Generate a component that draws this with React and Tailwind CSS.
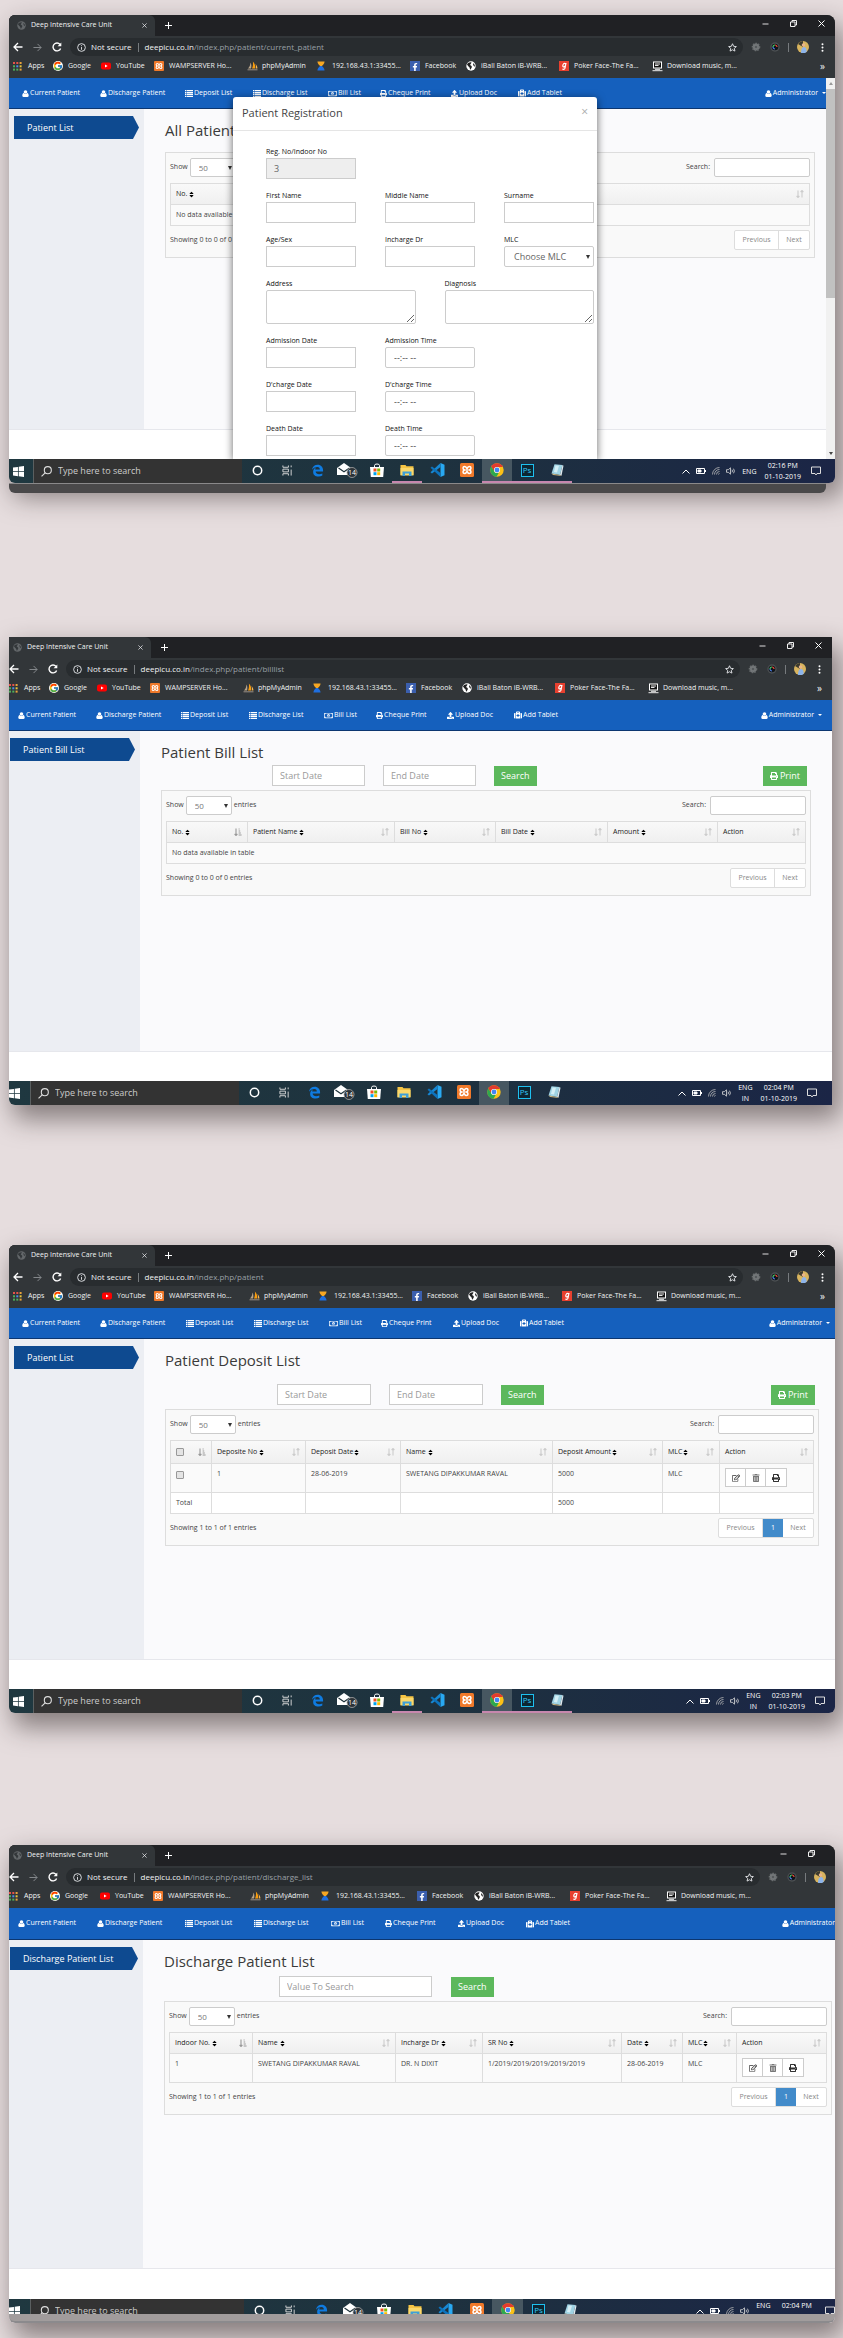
import React from "react";
import { clsx } from "clsx";
import { FaSort, FaPrint, FaUpload, FaMedkit, FaRegEdit, FaTrashAlt, FaRegMoneyBillAlt, FaFacebookF } from "react-icons/fa";
import { FcGoogle } from "react-icons/fc";

/* ---------- icons ---------- */

const UserIcon = () => (
  <svg viewBox="0 0 14 14" className="size-[7px] shrink-0" fill="currentColor">
    <circle cx="7" cy="4" r="3.6" />
    <path d="M3.6 6C1.4 6.6.6 8.800.6 11.500c0 1.500.9 2.300 2.300 2.300h8.200c1.400 0 2.300-.8 2.300-2.300C13.400 8.800 12.600 6.600 10.400 6 9.600 7.300 8.400 8 7 8S4.400 7.300 3.600 6z" />
  </svg>
);

const ListIcon = () => (
  <svg viewBox="0 0 16 14" className="h-[7px] w-2 shrink-0" fill="currentColor">
    <path d="M0 0h3v2.500H0zM4 0h12v2.500H4zM0 3.800h3v2.500H0zM4 3.800h12v2.500H4zM0 7.600h3v2.500H0zM4 7.600h12v2.500H4zM0 11.400h3V14H0zM4 11.400h12V14H4z" />
  </svg>
);

const AppsIcon = () => (
  <svg viewBox="0 0 9 9" className="size-[9px]">
    {["#e5534b", "#e5534b", "#e9a23b", "#4fae5b", "#4d8fe8", "#e9c63b", "#4fae5b", "#4fae5b", "#e9a23b"].map((c, i) => (
      <rect key={i} x={(i % 3) * 3.3} y={Math.floor(i / 3) * 3.3} width="2" height="2" fill={c} />
    ))}
  </svg>
);

const YouTubeIcon = () => (
  <svg viewBox="0 0 10 10" className="size-[10px]">
    <rect y="1.500" width="10" height="7" rx="2" fill="#f00" />
    <path d="M4 3.500v3L6.700 5z" fill="#fff" />
  </svg>
);

const XamppIcon = ({ className }) => (
  <svg viewBox="0 0 14 14" className={className}>
    <rect width="14" height="14" rx="1.500" fill="#f0792a" />
    <path d="M4.800 3.500C3.500 3.500 3 4.300 3 5s.6 1.700 1.600 2C3.600 7.300 3 8.100 3 9s.6 1.500 1.700 1.500S6.500 9.500 7 8.200c.5 1.300 1.200 2.300 2.300 2.300S11 9.900 11 9s-.6-1.700-1.600-2C10.400 6.700 11 5.900 11 5s-.5-1.500-1.800-1.500C8 3.500 7.500 4.500 7 5.800 6.500 4.500 6 3.500 4.800 3.500z" fill="none" stroke="#fff" strokeWidth="1.500" />
  </svg>
);

const PmaIcon = () => (
  <svg viewBox="0 0 11 10" className="h-[10px] w-[11px]">
    <path d="M1 7.500C2.500 6 3.300 4 3.500 1.500 4.600 3.500 4.500 6 4 7.500z" fill="#b9a58a" />
    <path d="M5 7.500C6 5.500 6.200 3 5.900.5 8 2.500 8.600 5.500 8 7.500z" fill="#f89c0e" />
    <path d="M8.600 7.500c.5-1.500.4-3-.1-4.500 1.300 1.200 2 3 1.900 4.500z" fill="#f8b54e" />
    <path d="M.5 8.800h10" stroke="#9a8f83" strokeWidth="1" />
  </svg>
);

const HourglassIcon = () => (
  <svg viewBox="0 0 9 11" className="h-[10px] w-2">
    <path d="M.5.5h8C8.500 3 6.500 4.500 5.500 5.500h-2C2.500 4.500.5 3 .5.500z" fill="#f5a623" />
    <path d="M3.500 5.500h2c1 1 3 2.500 3 5h-8c0-2.500 2-4 3-5z" fill="#1f6fe0" />
  </svg>
);

const FacebookIcon = () => (
  <span className="flex size-[10px] items-end justify-center bg-[#3b5fae] text-white">
    <FaFacebookF className="size-2" />
  </span>
);

const GlobeIcon = ({ className, fill, land }) => (
  <svg viewBox="0 0 10 10" className={className}>
    <circle cx="5" cy="5" r="4.700" fill={fill} />
    <path d="M1 3.500C2 1.800 4 1 5.500 1.500 5 3 4 3.200 4.300 4.200c1 .4 1.700.8 1.500 2C5.500 7.500 4.500 8 4.400 9 3.600 7 3.800 6.200 2.500 5.500z" fill={land} />
    <path d="M7 2.200c1.200.6 2 1.800 1.900 3.400C8 5.500 7 4.500 7 2.200z" fill={land} />
  </svg>
);

const GaanaIcon = () => (
  <svg viewBox="0 0 10 10" className="size-[10px]">
    <rect width="10" height="10" fill="#e8402f" />
    <path d="M7 2 6 7.200Q5.600 8.600 3.400 8.200M6.800 3Q6 2 4.800 2.600 3.300 4 3.900 5.500 5 6.500 6.300 5" fill="none" stroke="#fff" strokeWidth="1.200" />
  </svg>
);

const ScreenIcon = () => (
  <svg viewBox="0 0 11 11" className="size-[11px]">
    <rect x="1.500" y="1" width="8" height="6" fill="#111" stroke="#fff" strokeWidth="1" />
    <path d="M3 3h5M3 4.500h3.500M.5 9.700h10M3 8.300h5" stroke="#fff" strokeWidth=".9" />
  </svg>
);

const SortArrows = ({ active }) => (
  <svg viewBox="0 0 8 8" className={clsx("size-2 shrink-0", active ? "text-[#999]" : "text-[#ccc]")} fill="none" stroke="currentColor">
    <path d="M2 .5v7M.6 6 2 7.500 3.400 6" strokeWidth="1.100" />
    {active ? <path d="M4.600 1h1M4.600 3h1.600M4.600 5h2.200M4.600 7h3" strokeWidth="1.200" /> : <path d="M6 7.500v-7M4.600 2 6 .5 7.400 2" strokeWidth="1.100" />}
  </svg>
);

const EdgeIcon = () => (
  <svg viewBox="0 0 14 14" className="size-[13px]">
    <path d="M1 6.300C1.500 2.500 4 .7 7.200.7c3.700 0 5.800 2.700 5.800 6v1.500H5c.1 2 1.900 2.800 3.700 2.800 1.400 0 2.600-.4 3.500-.9v2.400c-1 .6-2.400 1-4.200 1-3.500 0-5.700-2-5.700-5 0-2.100 1.100-3.700 2.900-4.700-.4.600-.6 1.400-.7 2.200h5c0-1.600-.7-2.700-2.600-2.700C4.400 3.300 2.200 4.500 1 6.300z" fill="#0f7be0" />
  </svg>
);

const MailIcon = () => (
  <svg viewBox="0 0 22 16" className="h-4 w-[22px] shrink-0">
    <path d="M1 6 8 1l7 5v7H1z" fill="#fff" />
    <path d="m2.500 6 5.500 3.700L13.500 6" fill="none" stroke="#20343c" strokeWidth="1.200" />
    <circle cx="16" cy="10.500" r="5" fill="#2c3237" stroke="#aaa" strokeWidth=".8" />
    <text x="16" y="13" textAnchor="middle" fontSize="7" fill="#fff" fontFamily="Open Sans">14</text>
  </svg>
);

const StoreIcon = () => (
  <svg viewBox="0 0 14 15" className="h-[15px] w-[14px]">
    <path d="M4.500 4V2.500Q4.500 1 7 1t2.500 1.500V4" fill="none" stroke="#fff" strokeWidth="1" />
    <path d="M0 4h14l-.8 10H.8z" fill="#fff" />
    <path d="M3.500 5.500h3v3h-3z" fill="#f25022" />
    <path d="M7.200 5.500h3v3h-3z" fill="#7fba00" />
    <path d="M3.500 9.200h3v3h-3z" fill="#00a4ef" />
    <path d="M7.200 9.200h3v3h-3z" fill="#ffb900" />
  </svg>
);

const FolderIcon = () => (
  <svg viewBox="0 0 14 13" className="h-[13px] w-[14px]">
    <path d="M.5 1h5l1 1.300h7V11H.5z" fill="#f6c544" />
    <path d="M.5 4h13v7.500H.5z" fill="#fbd86b" />
    <path d="M2.500 12V7.500h9V12H9V9.500H5V12z" fill="#3f9fd8" />
  </svg>
);

const CodeIcon = () => (
  <svg viewBox="0 0 15 14" className="h-[14px] w-[15px]">
    <path d="M10.500 0 14.500 1.700v10.600L10.500 14z" fill="#29a9f2" />
    <path d="M10.500 0 .5 9.200l1.500 1.400 8.500-6.500z" fill="#1788d4" />
    <path d="M10.500 14 .5 4.800 2 3.400l8.500 6.500z" fill="#0d73bd" />
  </svg>
);

const ChromeIcon = () => (
  <svg viewBox="0 0 14 14" className="size-[14px]">
    <circle cx="7" cy="7" r="6.700" fill="#fbc116" />
    <path d="M1.200 3.600A6.700 6.700 0 0 1 12.900 4H7a3 3 0 0 0-2.700 1.700L3.800 8z" fill="#e33b2e" />
    <path d="M1.200 3.600A6.700 6.700 0 0 0 6.500 13.700L9.600 8.500A3 3 0 0 1 4.400 8.500z" fill="#2da94f" />
    <circle cx="7" cy="7" r="3" fill="#fff" />
    <circle cx="7" cy="7" r="2.400" fill="#4285f4" />
  </svg>
);

const PsIcon = () => (
  <span className="flex size-[13px] items-center justify-center border border-[#1ec0f0] bg-[#0c2633] text-[8px] leading-none text-[#35c8f5]">Ps</span>
);

const NotepadIcon = () => (
  <svg viewBox="0 0 14 14" className="size-[14px]">
    <path d="M4.500 1.200 12.500 2 10 12 1.500 10.500z" fill="#9fd3e4" />
    <path d="m12.500 2 1 .8-2 10-1.500-.8z" fill="#dfe9ee" />
    <path d="m1.500 10.500 8.500 1.500 1.500.9-8.500-1z" fill="#c7b07a" />
    <path d="M5.500 2.500 4 9l3 .5L9 2.800z" fill="#d4eff6" />
  </svg>
);

/* ---------- browser chrome ---------- */

const bookmarks = [
  [AppsIcon, "Apps"],
  [() => <FcGoogle className="size-[10px] rounded-full bg-white" />, "Google"],
  [YouTubeIcon, "YouTube"],
  [() => <XamppIcon className="size-[10px]" />, "WAMPSERVER Ho..."],
  [PmaIcon, "phpMyAdmin"],
  [HourglassIcon, "192.168.43.1:33455..."],
  [FacebookIcon, "Facebook"],
  [() => <GlobeIcon className="size-[10px]" fill="#fff" land="#222" />, "iBall Baton iB-WRB..."],
  [GaanaIcon, "Poker Face-The Fa..."],
  [ScreenIcon, "Download music, m..."],
];

function BrowserChrome({ path, inset, cut, columns }) {
  return (
    <div className="bg-[#323639] text-[#f1f3f4]">
      <div className="flex h-[21px] items-stretch bg-[#202124]">
        <div className={clsx("flex shrink-0 items-center rounded-tr-md bg-[#323639] pr-2", inset ? "w-[146px] pl-2" : cut ? "w-[146px] pl-1" : "w-[142px] pl-1")}>
          <GlobeIcon className="size-[9px] shrink-0" fill="#63676a" land="#33373a" />
          <span className="ml-[5px] flex-1 text-[7px] whitespace-nowrap">Deep Intensive Care Unit</span>
          <button aria-label="Close tab" className="p-0">
            <svg viewBox="0 0 6 6" className="size-[5px]" stroke="#e8eaed" strokeWidth=".9"><path d="m.5.5 5 5m0-5-5 5" /></svg>
          </button>
        </div>
        <button aria-label="New tab" className="ml-[10px] self-center">
          <svg viewBox="0 0 8 8" className="size-[7px]" stroke="#fff" strokeWidth="1.200"><path d="M4 0v8M0 4h8" /></svg>
        </button>
        <div className={clsx("ml-auto flex items-center gap-[21px] pb-1", cut ? "pr-5" : "pr-[10px]")}>
          <button aria-label="Minimize"><svg viewBox="0 0 7 7" className="size-[7px]" stroke="#ddd"><path d="M.5 4h6" /></svg></button>
          <button aria-label="Restore"><svg viewBox="0 0 7 7" className="size-[7px]" stroke="#eee" fill="none"><path d="M.5 2h4.500v4.500H.5zM2 2V.5h4.500V5H5" /></svg></button>
          {!cut && <button aria-label="Close"><svg viewBox="0 0 7 7" className="size-[7px]" stroke="#fff"><path d="m.5.5 6 6m0-6-6 6" /></svg></button>}
        </div>
      </div>
      <div className={clsx("flex h-[22px] items-center", inset ? "pl-1" : "pl-0")}>
        <button aria-label="Back"><svg viewBox="0 0 10 10" className="size-[10px]" fill="none" stroke="#fff" strokeWidth="1.300"><path d="M9.500 5H1M5 1 1 5l4 4" /></svg></button>
        <button aria-label="Forward" className="ml-[10px]"><svg viewBox="0 0 10 10" className="size-[9px]" fill="none" stroke="#85898c" strokeWidth="1.100"><path d="M.5 5H9M5 1l4 4-4 4" /></svg></button>
        <button aria-label="Reload" className="ml-[10px]"><svg viewBox="0 0 10 10" className="size-[10px]" fill="none" stroke="#fff" strokeWidth="1.400"><path d="M8.600 6.400A3.900 3.900 0 1 1 8 2.500" /><path d="M9.300.5v3.700H5.600z" fill="#fff" stroke="none" /></svg></button>
        <div className="ml-2 flex h-[18px] flex-1 items-center rounded-full bg-[#282c2f] pr-[6px] pl-[7px] text-[8px] whitespace-nowrap">
          <svg viewBox="0 0 10 10" className="size-[9px]" fill="none" stroke="#e8eaed"><circle cx="5" cy="5" r="4.300" /><path d="M5 4.500V7.500M5 2.500v1" /></svg>
          <span className="ml-[5px]">Not secure</span>
          <span className="mx-[6px] h-[9px] w-px bg-[#777b7e]" />
          <span>deepicu.co.in<span className="text-[#9aa0a6]">{path}</span></span>
          <svg viewBox="0 0 10 10" className="ml-auto size-[9px]" fill="none" stroke="#e8eaed"><path d="M5 .8 6.300 3.700l3 .3-2.300 2 .7 3L5 7.500 2.300 9 3 6 .7 4l3-.3z" /></svg>
        </div>
        <svg viewBox="0 0 10 10" className="ml-2 size-[10px]"><circle cx="5" cy="5" r="3.400" fill="#75797b" stroke="#686c6e" strokeWidth="1.800" strokeDasharray="1.500 1" /><circle cx="5" cy="5" r="1.300" fill="#55595c" /></svg>
        <svg viewBox="0 0 10 10" className="ml-[9px] size-[10px]"><circle cx="5" cy="5" r="4.700" fill="#4a4e51" /><circle cx="5" cy="5" r="3.300" fill="#101418" /><path d="M3 5a2 2 0 0 1 2-2" stroke="#4bd16a" fill="none" strokeWidth="1.200" /><path d="M5 3a2 2 0 0 1 2 2" stroke="#f0503c" fill="none" strokeWidth="1.200" /><path d="M3 5a2 2 0 0 0 2 2" stroke="#4b7fe8" fill="none" strokeWidth="1.200" /></svg>
        <span className="ml-2 h-[9px] w-px bg-[#777b7e]" />
        <svg viewBox="0 0 12 12" className={clsx("ml-2 size-3", cut ? "mr-[9px]" : "")}><circle cx="6" cy="6" r="6" fill="#d8b45e" /><path d="M1 3A6 6 0 0 1 6 0v6z" fill="#3c3a2e" /><circle cx="6.500" cy="4" r="1.800" fill="#e8b48a" /><path d="M4 12c0-4 1-6 3-6s2.800 2 2.600 5A6 6 0 0 1 4 12z" fill="#8db4ea" /></svg>
        {!cut && <button aria-label="Menu" className="mr-[11px] ml-3"><svg viewBox="0 0 3 10" className="h-[9px] w-[3px]" fill="#fff"><circle cx="1.500" cy="1.400" r="1.100" /><circle cx="1.500" cy="5" r="1.100" /><circle cx="1.500" cy="8.600" r="1.100" /></svg></button>}
      </div>
      <div className={clsx("flex h-5 items-center pb-1", inset ? "pl-1" : "pl-0")}>
        <div className={clsx("grid flex-1 items-center text-[7px] whitespace-nowrap", columns)}>
          {bookmarks.map(([Icon, name]) => (
            <a key={name} href="#" className="flex items-center">
              <span className="flex w-[15px] items-center"><Icon /></span>
              {name}
            </a>
          ))}
        </div>
        {!cut && <button aria-label="More bookmarks" className="mr-[10px] text-[10px] leading-3">»</button>}
      </div>
    </div>
  );
}

const navItems = [
  [UserIcon, "Current Patient"],
  [UserIcon, "Discharge Patient"],
  [ListIcon, "Deposit List"],
  [ListIcon, "Discharge List"],
  [() => <FaRegMoneyBillAlt className="h-[7px] w-[9px]" />, "Bill List"],
  [() => <FaPrint className="size-[7px]" />, "Cheque Print"],
  [() => <FaUpload className="size-[7px]" />, "Upload Doc"],
  [() => <FaMedkit className="size-2" />, "Add Tablet"],
];

function NavBar({ inset, columns, end, tall, caret = true }) {
  return (
    <nav className={clsx("flex items-center border-b border-[#0c3670] bg-[#1560bd] text-[7px] whitespace-nowrap text-white", tall ? "h-8" : "h-[31px]", inset ? "pl-[13px]" : "pl-[9px]", end)}>
      <div className={clsx("grid flex-1", columns)}>
        {navItems.map(([Icon, name]) => (
          <a key={name} href="#" className="flex items-center gap-px"><Icon />{name}</a>
        ))}
      </div>
      <a href="#" className="flex items-center gap-px">
        <UserIcon />Administrator
        {caret && <svg viewBox="0 0 4 2" className="ml-[3px] h-[2px] w-1" fill="#fff"><path d="M0 0h4L2 2z" /></svg>}
      </a>
    </nav>
  );
}

/* ---------- taskbar ---------- */

const apps = [
  ["Cortana", () => <svg viewBox="0 0 11 11" className="size-[11px]" fill="none" stroke="#fff" strokeWidth="1.500"><circle cx="5.500" cy="5.500" r="4.200" /></svg>],
  ["Task view", () => <svg viewBox="0 0 12 12" className="size-[11px]" fill="none" stroke="#ddd"><path d="M1 .5v2h6v-2M1 4.500h6v3H1zM1 11.500v-2h6v2M10 .5v2M10 5v6.500" /></svg>],
  ["Edge", EdgeIcon],
  ["Mail", MailIcon],
  ["Store", StoreIcon],
  ["Explorer", FolderIcon, true],
  ["Code", CodeIcon],
  ["XAMPP", () => <XamppIcon className="size-[14px]" />],
  ["Chrome", ChromeIcon, true, true],
  ["Photoshop", PsIcon, true],
  ["Notepad", NotepadIcon, true],
];

function TaskBar({ id, inset, time, lang, wide, underline = true, end }) {
  return (
    <div className="flex h-6 items-stretch bg-linear-to-r from-[#1f3840] via-[#1e323e] to-[#1b2546] text-white">
      <button aria-label="Start" className={clsx("flex shrink-0 items-center", inset ? "w-6 pl-1" : "w-[21px] pl-0")}>
        <svg viewBox="0 0 10 10" className="size-[11px]" fill="#fff"><path d="M0 1.400 4.500.8v3.900H0zM5.200.7 10 0v4.700H5.200zM0 5.400h4.500v3.900L0 8.600zM5.200 5.400H10V10l-4.800-.7z" /></svg>
      </button>
      <label htmlFor={id} className={clsx("flex shrink-0 items-center border-l border-[#5a5f60] bg-[#333] pl-[7px]", wide ? "w-[214px]" : "w-[209px]")}>
        <svg viewBox="0 0 10 10" className="size-[11px] shrink-0" fill="none" stroke="#ddd"><circle cx="6.200" cy="3.800" r="3.200" /><path d="M4 6 .5 9.500" /></svg>
        <input id={id} type="text" placeholder="Type here to search" className="ml-1.5 min-w-0 flex-1 bg-transparent text-[9px] outline-none placeholder:text-[#ccc]" />
      </label>
      <div className="flex">
        {apps.map(([name, Icon, open, active]) => (
          <button key={name} aria-label={name} className={clsx("flex items-center justify-center border-b-2", wide ? "w-[31px]" : "w-[30px]", active && "bg-[#475761]", open && underline ? "border-[#c787ae]" : "border-transparent")}>
            <Icon />
          </button>
        ))}
      </div>
      <div className={clsx("ml-auto flex items-center text-[7px] leading-[11px] whitespace-nowrap", end)}>
        <svg viewBox="0 0 8 5" className="h-[5px] w-2" fill="none" stroke="#fff"><path d="M.5 4.500 4 1l3.500 3.500" /></svg>
        <svg viewBox="0 0 10 6" className="ml-1.5 h-1.5 w-[10px]" fill="none" stroke="#fff"><path d="M.5.5h8v5h-8z" /><path d="M2 2h3v2H2z" fill="#fff" /><path d="M9.500 2v2" /></svg>
        <svg viewBox="0 0 8 8" className="ml-1.5 size-2" fill="none" stroke="#bbb" strokeWidth=".8"><path d="M.5 7.500A7 7 0 0 1 7.500.5M2.500 7.500a5 5 0 0 1 5-5M4.500 7.500a3 3 0 0 1 3-3M6.500 7.500a1 1 0 0 1 1-1" /></svg>
        <svg viewBox="0 0 10 8" className="ml-1.5 h-2 w-[10px]" fill="none" stroke="#ddd" strokeWidth=".8"><path d="M.5 2.700h1.800L4.500.8v6.400L2.300 5.300H.5zM6 2.700q1 1.300 0 2.600M7.500 1.700q1.800 2.300 0 4.600" /></svg>
        <span className="ml-1.5 text-center whitespace-pre-line">{lang}</span>
        <span className="ml-2 text-center whitespace-pre-line">{time + "\n01-10-2019"}</span>
        <svg viewBox="0 0 10 10" className="ml-[10px] size-[10px]" fill="none" stroke="#ddd"><path d="M.5 1h9v6.500H6L5 9 4 7.500H.5z" /></svg>
      </div>
    </div>
  );
}

/* ---------- patient pages ---------- */

const field = "border border-[#ccc] bg-white outline-none";

function SideBar({ title, inset, width }) {
  return (
    <aside className={clsx("shrink-0 bg-[#eceef3] pt-[7px] pr-[5px]", inset ? "pl-[5px]" : "pl-px", width)}>
      <a href="#" className="flex h-[23px] items-center bg-[#0e4a90] pl-[13px] text-[9px] text-white [clip-path:polygon(0_0,calc(100%-6px)_0,100%_50%,calc(100%-6px)_100%,0_100%)]">
        {title}
      </a>
    </aside>
  );
}

function PageBody({ title, side, inset, sideWidth, end, tall, children }) {
  return (
    <>
      <div className={clsx("flex border-b border-[#e6e7ec] bg-[#fafafc]", tall ? "min-h-[329px]" : "min-h-[321px]")}>
        <SideBar title={side} inset={inset} width={sideWidth} />
        <main className={clsx("min-w-0 flex-1 pt-[11px] pl-[21px]", end)}>
          <h1 className="text-[15px] leading-5 text-[#3a3a3a]">{title}</h1>
          {children}
        </main>
      </div>
      <div className={clsx("bg-white", tall ? "h-[30px]" : "h-[29px]")} />
    </>
  );
}

const FilterInput = ({ label, width }) => (
  <input aria-label={label} placeholder={label} className={clsx(field, "h-[21px] px-[7px] text-[9px] placeholder:text-[#999]", width)} />
);

const GreenButton = ({ children, className }) => (
  <button className={clsx("flex h-5 items-center justify-center gap-[2px] bg-[#5cb85c] px-[7px] text-[9px] text-white", className)}>{children}</button>
);

function DataPanel({ id, columns, summary, page, tallHead, children }) {
  return (
    <section className="border border-[#ddd] bg-[#f9f9f9] px-1 pt-[5px] pb-[7px] text-[7px] text-[#444]">
      <div className="flex items-center justify-between">
        <div className="flex items-center gap-[2px]">
          <label htmlFor={id + "-len"}>Show</label>
          <span className="relative flex">
            <select id={id + "-len"} className={clsx(field, "h-[19px] w-[46px] appearance-none rounded-xs pl-2 text-[8px] text-[#777]")}>
              <option>50</option>
            </select>
            <svg viewBox="0 0 4 4" className="pointer-events-none absolute top-2 right-1 size-1" fill="#333"><path d="M0 0h4L2 4z" /></svg>
          </span>
          <label htmlFor={id + "-len"}>entries</label>
        </div>
        <div className="flex items-center gap-1">
          <label htmlFor={id + "-search"}>Search:</label>
          <input id={id + "-search"} type="search" className={clsx(field, "h-[19px] w-24 rounded-xs")} />
        </div>
      </div>
      <table className="mt-[6px] w-full table-fixed border-collapse bg-[#fafafa] text-left [&_td]:border [&_td]:border-[#ddd] [&_td]:px-[5px] [&_th]:border [&_th]:border-[#ddd] [&_th]:px-[5px]">
        <thead>
          <tr className={clsx("bg-linear-to-b from-[#f9f9f9] to-[#efefef]", tallHead ? "h-[23px]" : "h-[21px]")}>
            {columns.map(([name, width, sort, gap], i) => (
              <th key={i} className={clsx("p-0 font-medium text-[#222]", width)}>
                <span className="flex items-center">
                  {name}
                  {sort && <FaSort className={clsx("size-[7px] text-black", gap && "ml-px")} />}
                  <span className="ml-auto"><SortArrows active={i === 0} /></span>
                </span>
              </th>
            ))}
          </tr>
        </thead>
        <tbody>{children}</tbody>
      </table>
      <div className="mt-1 flex items-start justify-between">
        <p className="pt-1 leading-[11px]">{summary}</p>
        <div className="flex h-5 overflow-hidden rounded-xs border border-[#ddd] bg-white text-[#888]">
          <button className="w-11 border-r border-[#ddd]">Previous</button>
          {page && <button className="w-5 bg-[#428bca] text-white">{page}</button>}
          <button className="w-[30px]">Next</button>
        </div>
      </div>
    </section>
  );
}

const EmptyRow = ({ span }) => (
  <tr className="h-[21px]"><td colSpan={span}>No data available in table</td></tr>
);

const RowActions = () => (
  <div className="inline-flex h-[19px] divide-x divide-[#ccc] border border-[#ccc] bg-white text-[#333]">
    <button aria-label="Edit" className="flex w-5 items-center justify-center"><FaRegEdit className="size-2" /></button>
    <button aria-label="Delete" className="flex w-5 items-center justify-center text-[#777]"><FaTrashAlt className="size-2" /></button>
    <button aria-label="Print" className="flex w-5 items-center justify-center"><FaPrint className="size-2" /></button>
  </div>
);

const Tick = ({ label }) => (
  <input type="checkbox" aria-label={label} className="block size-2 appearance-none rounded-[1px] border border-[#999] bg-[#e4e4e4]" />
);

/* ---------- registration dialog ---------- */

function Field({ id, label, className, children }) {
  return (
    <div className={className}>
      <label htmlFor={id} className="block h-3 text-[7px] leading-[11px] text-[#111]">{label}</label>
      {children || <input id={id} className={clsx(field, "block h-[21px] w-full px-2 text-[9px]")} />}
    </div>
  );
}

const TimeField = ({ id, label }) => (
  <Field id={id} label={label}>
    <input id={id} placeholder="--:-- --" className={clsx(field, "block h-[21px] w-full rounded-xs px-2 text-[9px] placeholder:text-[#444]")} />
  </Field>
);

function RegistrationDialog() {
  return (
    <div role="dialog" aria-label="Patient Registration" className="absolute top-[19px] bottom-0 left-[224px] w-[364px] overflow-hidden rounded-t-[3px] bg-white shadow-[0_2px_8px_rgba(0,0,0,0.6)]">
      <header className="flex h-[34px] items-center justify-between border-b border-[#e5e5e5] pr-[9px] pl-[9px]">
        <h2 className="text-[11px] text-[#444]">Patient Registration</h2>
        <button aria-label="Close dialog" className="pb-1 text-[12px] leading-none text-[#aaa]">×</button>
      </header>
      <form className="grid grid-cols-12 gap-y-[11px] pt-[15px] pr-[3px] pl-[33px]">
        <div className="col-span-12 grid grid-cols-3 gap-x-[29px]">
          <Field id="reg" label="Reg. No/Indoor No">
            <input id="reg" readOnly value="3" className="block h-[21px] w-full border border-[#ccc] bg-[#eee] px-[7px] text-[9px] text-[#666] outline-none" />
          </Field>
        </div>
        <div className="col-span-12 grid grid-cols-3 gap-x-[29px]">
          <Field id="first" label="First Name" />
          <Field id="middle" label="Middle Name" />
          <Field id="surname" label="Surname" />
        </div>
        <div className="col-span-12 grid grid-cols-3 gap-x-[29px]">
          <Field id="age" label="Age/Sex" />
          <Field id="incharge" label="Incharge Dr" />
          <Field id="mlc" label="MLC">
            <span className="relative block">
              <select id="mlc" className={clsx(field, "block h-[21px] w-full appearance-none rounded-xs px-[9px] text-[9px] text-[#666]")}>
                <option>Choose MLC</option>
              </select>
              <svg viewBox="0 0 4 4" className="pointer-events-none absolute top-[9px] right-1 size-1" fill="#333"><path d="M0 0h4L2 4z" /></svg>
            </span>
          </Field>
        </div>
        <div className="col-span-12 grid grid-cols-2 gap-x-[29px]">
          <Field id="address" label="Address">
            <textarea id="address" className={clsx(field, "block h-[34px] w-full rounded-xs")} />
          </Field>
          <Field id="diagnosis" label="Diagnosis">
            <textarea id="diagnosis" className={clsx(field, "block h-[34px] w-full rounded-xs")} />
          </Field>
        </div>
        {[["adm", "Admission"], ["dch", "D'charge"], ["death", "Death"]].map(([id, name]) => (
          <div key={id} className="col-span-12 grid grid-cols-3 gap-x-[29px]">
            <Field id={id + "-date"} label={name + " Date"} />
            <TimeField id={id + "-time"} label={name + " Time"} />
          </div>
        ))}
      </form>
    </div>
  );
}

/* ---------- windows ---------- */

const shadow = "shadow-[6px_12px_26px_2px_rgba(40,30,30,0.5)]";
const bookmarkCols = "grid-cols-[40px_48px_53px_93px_70px_93px_56px_93px_93px_auto]";
const navCols = "grid-cols-[78px_85px_68px_75px_52px_71px_67px_auto]";

export default function App() {
  return (
    <div className="bg-[#e6ddde] pt-[15px] pr-2 pb-[15px] pl-[9px] font-['Open_Sans','Noto_Sans',sans-serif]">
      {/* current patients */}
      <div>
        <div className={clsx("overflow-hidden rounded-md rounded-tr-lg", shadow)}>
          <BrowserChrome inset path="/index.php/patient/current_patient" columns={bookmarkCols} />
          <div className="relative flex overflow-hidden">
            <div className="min-w-0 flex-1">
              <NavBar inset columns={navCols} end="pr-0" />
              <PageBody inset title="All Patient" side="Patient List" sideWidth="w-[135px]" end="pr-[11px]">
                <div className="mt-3">
                  <DataPanel id="all" summary="Showing 0 to 0 of 0 entries" columns={[["No.", "w-[81px]", true, true], ["", "w-auto"]]}>
                    <EmptyRow span={2} />
                  </DataPanel>
                </div>
              </PageBody>
            </div>
            <div className="flex w-[9px] flex-col items-center justify-between bg-[#f1f1f1] pb-1">
              <div className="flex w-full flex-col items-center">
                <svg viewBox="0 0 4 3" className="my-[4px] h-[3px] w-1" fill="#999"><path d="M0 3h4L2 0z" /></svg>
                <div className="h-[209px] w-full bg-[#c1c1c1]" />
              </div>
              <svg viewBox="0 0 4 3" className="h-[3px] w-1" fill="#444"><path d="M0 0h4L2 3z" /></svg>
            </div>
            <RegistrationDialog />
          </div>
          <TaskBar id="task1" inset time="02:16 PM" lang="ENG" end="pr-[14px]" />
        </div>
        <div className="mr-[9px] h-[10px] rounded-b-md border-t border-[#8a898a] bg-[#4a494a]" />
      </div>

      {/* bill list */}
      <div className={clsx("mt-36 mr-[3px] overflow-hidden rounded-bl-md", shadow)}>
        <BrowserChrome path="/index.php/patient/billlist" columns={bookmarkCols} />
        <NavBar columns={navCols} end="pr-[10px]" />
        <PageBody title="Patient Bill List" side="Patient Bill List" sideWidth="w-[131px]" end="pr-[21px]">
          <div className="mt-[3px] mb-1 flex items-center pr-1 pl-[111px]">
            <FilterInput label="Start Date" width="w-[93px]" />
            <span className="w-[18px]" />
            <FilterInput label="End Date" width="w-[93px]" />
            <GreenButton className="ml-[18px]">Search</GreenButton>
            <GreenButton className="ml-auto"><FaPrint className="size-2" />Print</GreenButton>
          </div>
          <DataPanel
            id="bill"
            summary="Showing 0 to 0 of 0 entries"
            columns={[["No.", "w-[81px]", true, true], ["Patient Name", "w-[147px]", true, true], ["Bill No", "w-[101px]", true, true], ["Bill Date", "w-[112px]", true, true], ["Amount", "w-[110px]", true, true], ["Action", "w-auto"]]}
          >
            <EmptyRow span={6} />
          </DataPanel>
        </PageBody>
        <TaskBar id="task2" time="02:04 PM" lang={"ENG\nIN"} underline={false} end="pr-[15px]" />
      </div>

      {/* deposit list */}
      <div className={clsx("mt-[140px] overflow-hidden rounded-md rounded-tr-lg", shadow)}>
        <BrowserChrome inset path="/index.php/patient" columns="grid-cols-[40px_49px_52px_95px_70px_93px_56px_94px_94px_auto]" />
        <NavBar inset columns="grid-cols-[78px_86px_68px_75px_52px_72px_67px_auto]" end="pr-[5px]" />
        <PageBody inset title="Patient Deposit List" side="Patient List" sideWidth="w-[135px]" end="pr-4">
          <div className="mt-[14px] mb-1 flex items-center pr-1 pl-[112px]">
            <FilterInput label="Start Date" width="w-[94px]" />
            <span className="w-[18px]" />
            <FilterInput label="End Date" width="w-[94px]" />
            <GreenButton className="ml-[18px]">Search</GreenButton>
            <GreenButton className="ml-auto"><FaPrint className="size-2" />Print</GreenButton>
          </div>
          <DataPanel
            id="deposit"
            tallHead
            page="1"
            summary="Showing 1 to 1 of 1 entries"
            columns={[[<Tick key="all" label="Select all" />, "w-[41px]"], ["Deposite No", "w-[94px]", true, true], ["Deposit Date", "w-[95px]", true], ["Name", "w-[152px]", true, true], ["Deposit Amount", "w-[110px]", true], ["MLC", "w-[57px]", true], ["Action", "w-auto"]]}
          >
            <tr className="h-[29px] align-top leading-3 [&>td]:pt-1">
              <td><span className="block pt-[3px]"><Tick label="Select row" /></span></td>
              <td>1</td>
              <td>28-06-2019</td>
              <td>SWETANG DIPAKKUMAR RAVAL</td>
              <td>5000</td>
              <td>MLC</td>
              <td><RowActions /></td>
            </tr>
            <tr className="h-[21px] bg-white">
              <td>Total</td><td /><td /><td /><td>5000</td><td /><td />
            </tr>
          </DataPanel>
        </PageBody>
        <TaskBar id="task3" inset time="02:03 PM" lang={"ENG\nIN"} end="pr-[10px]" />
      </div>

      {/* discharge list */}
      <div className={clsx("mt-[132px] overflow-hidden rounded-md rounded-tr-lg", shadow)}>
        <BrowserChrome cut path="/index.php/patient/discharge_list" columns="grid-cols-[41px_50px_53px_97px_71px_96px_57px_96px_96px_auto]" />
        <NavBar tall columns="grid-cols-[79px_88px_69px_77px_54px_73px_68px_auto]" end="pr-0" caret={false} />
        <PageBody tall title="Discharge Patient List" side="Discharge Patient List" sideWidth="w-[134px]" end="pr-[3px]">
          <div className="mt-[5px] mb-1 flex items-center pl-[115px]">
            <FilterInput label="Value To Search" width="w-[153px]" />
            <GreenButton className="ml-[19px]">Search</GreenButton>
          </div>
          <DataPanel
            id="discharge"
            page="1"
            summary="Showing 1 to 1 of 1 entries"
            columns={[["Indoor No.", "w-[83px]", true, true], ["Name", "w-[143px]", true, true], ["Incharge Dr", "w-[87px]", true, true], ["SR No", "w-[139px]", true, true], ["Date", "w-[61px]", true, true], ["MLC", "w-[54px]", true], ["Action", "w-auto"]]}
          >
            <tr className="h-[29px] align-top leading-3 [&>td]:pt-1">
              <td>1</td>
              <td>SWETANG DIPAKKUMAR RAVAL</td>
              <td>DR. N DIXIT</td>
              <td>1/2019/2019/2019/2019/2019</td>
              <td>28-06-2019</td>
              <td>MLC</td>
              <td><RowActions /></td>
            </tr>
          </DataPanel>
        </PageBody>
        <div className="h-[15px] overflow-hidden">
          <TaskBar id="task4" wide time="02:04 PM" lang={"ENG\nIN"} underline={false} end="pr-0" />
        </div>
        <div className="h-[9px] rounded-b-md border-b-2 border-[#8b8a8d] bg-[#a19c9c]" />
      </div>
    </div>
  );
}
